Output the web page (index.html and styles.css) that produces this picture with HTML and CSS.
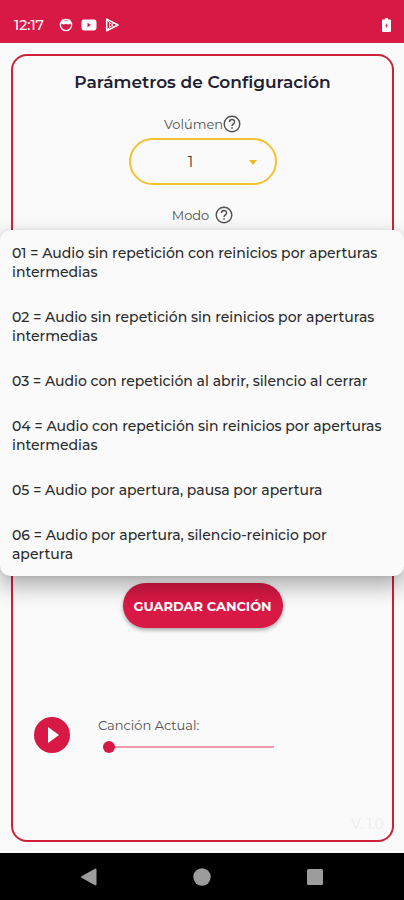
FILE: index.html
```html
<!DOCTYPE html>
<html lang="es">
<head>
<meta charset="utf-8">
<meta name="viewport" content="width=device-width, initial-scale=1">
<title>Parámetros de Configuración</title>
<link rel="stylesheet" href="styles.css">
</head>
<body>
<header class="status">
  <time class="clock">12:17</time>
  <svg class="icon" width="14" height="14" viewBox="0 0 14 14"><circle cx="7" cy="7" r="5.6" fill="none" stroke="#fff" stroke-width="1.4"/><path d="M2 3.6 3.2 1.3 5 2.4H9L10.8 1.3 12 3.6V5.4L9.4 6.6 7 6 4.6 6.6 2 5.4Z" fill="#fff"/></svg>
  <svg class="icon" width="16" height="14" viewBox="0 0 16 14"><rect x=".5" y="1.5" width="15" height="11" rx="2.4" fill="#fff"/><path d="M6.5 4.8V9.2L10 7Z" fill="#d81845"/></svg>
  <svg class="icon play-store" width="15" height="14" viewBox="0 0 15 14"><path d="M1.7 1.2V12.8L13 7Z" fill="none" stroke="#fff" stroke-width="1.5" stroke-linejoin="round"/><path d="M2 2 9.6 9M2 12 9.6 5M4.6 4.4V9.6" fill="none" stroke="#fff" stroke-width="1"/><circle cx="9" cy="7" r="1.8" fill="#d81845" stroke="#fff"/></svg>
  <svg class="icon battery" width="9" height="14" viewBox="0 0 9 14"><path d="M3 0H6V1.4H8Q9 1.4 9 2.4V13Q9 14 8 14H1Q0 14 0 13V2.4Q0 1.4 1 1.4H3Z" fill="#fff"/><path d="M4.8 5 3.2 8H4.2V10.4L5.9 7.2H4.8Z" fill="#d81845"/></svg>
</header>

<main class="card">
  <h1 class="title">Parámetros de Configuración</h1>

  <div class="field">
    <div class="field-head">
      <label for="volumen">Volúmen</label>
      <button class="help" type="button" aria-label="Ayuda de volumen"><svg width="18" height="18" viewBox="0 0 18 18" fill="none" stroke="#505050"><circle cx="9" cy="9" r="7.8" stroke-width="1.4"/><path d="M6.5 7.1C6.5 3.7 11.6 3.8 11.6 6.9 11.6 8.8 9 9 9 11.1" stroke-width="1.4"/><path d="M9 12.3V13.8" stroke-width="1.5"/></svg></button>
    </div>
    <div class="select-wrap">
      <select id="volumen" class="select"><option>1</option><option>2</option><option>3</option></select>
    </div>
  </div>

  <div class="field mode">
    <div class="field-head spaced">
      <span id="modo-label">Modo</span>
      <button class="help" type="button" aria-label="Ayuda de modo"><svg width="18" height="18" viewBox="0 0 18 18" fill="none" stroke="#505050"><circle cx="9" cy="9" r="7.8" stroke-width="1.4"/><path d="M6.5 7.1C6.5 3.7 11.6 3.8 11.6 6.9 11.6 8.8 9 9 9 11.1" stroke-width="1.4"/><path d="M9 12.3V13.8" stroke-width="1.5"/></svg></button>
    </div>
    <div class="menu" role="listbox" aria-labelledby="modo-label">
      <button type="button" role="option">01 = Audio sin repetición con reinicios por aperturas intermedias</button>
      <button type="button" role="option">02 = Audio sin repetición sin reinicios por aperturas intermedias</button>
      <button type="button" role="option">03 = Audio con repetición al abrir, silencio al cerrar</button>
      <button type="button" role="option">04 = Audio con repetición sin reinicios por aperturas intermedias</button>
      <button type="button" role="option">05 = Audio por apertura, pausa por apertura</button>
      <button type="button" role="option">06 = Audio por apertura, silencio-reinicio por apertura</button>
    </div>
  </div>

  <button class="save" type="button">GUARDAR CANCIÓN</button>

  <section class="player">
    <button class="play" type="button" aria-label="Reproducir"><svg width="36" height="36" viewBox="0 0 36 36"><circle cx="18" cy="18" r="18" fill="#d81845"/><path d="M14 10V26L25 18Z" fill="#fff"/></svg></button>
    <div class="track">
      <label for="posicion">Canción Actual:</label>
      <input id="posicion" class="slider" type="range" min="0" max="100" value="0">
    </div>
  </section>

  <footer class="version">V. 1.0</footer>
</main>

<nav class="navbar">
  <button type="button" aria-label="Atrás"><svg width="18" height="18" viewBox="0 0 18 18"><path d="M15.5 1.5V16.5L2 9Z" fill="#9c9c9c" stroke="#9c9c9c" stroke-width="2" stroke-linejoin="round"/></svg></button>
  <button type="button" aria-label="Inicio"><svg width="18" height="18" viewBox="0 0 18 18"><circle cx="9" cy="9" r="8.7" fill="#9c9c9c"/></svg></button>
  <button type="button" aria-label="Recientes"><svg width="18" height="18" viewBox="0 0 18 18"><rect x="1" y="1" width="16" height="16" rx="1.5" fill="#9c9c9c"/></svg></button>
</nav>
</body>
</html>
```
FILE: styles.css
```css
* { box-sizing: border-box; }

body {
  margin: 0;
  min-height: 100vh;
  display: flex;
  flex-direction: column;
  background: #fafafa;
  color: #2a2a2a;
  font: 14px/18px Montserrat, Inter, sans-serif;
}

button, select, input { font: inherit; color: inherit; margin: 0; }
button { border: 0; padding: 0; background: none; }
svg { display: block; }

.status {
  display: flex;
  align-items: center;
  gap: 8px;
  height: 43px;
  padding: 7px 13px 0 14px;
  background: #d81845;
  color: #fff;
}
.clock { margin-right: 7px; font-weight: 500; }
.battery { margin-left: auto; }

.card {
  flex: 1;
  display: flex;
  flex-direction: column;
  align-items: center;
  margin: 11px 10px 11px 11px;
  border: 2px solid #d02035;
  border-radius: 16px;
}

.title {
  margin: 15px 0 22px;
  font-size: 17px;
  line-height: 22px;
  font-weight: 600;
  color: #202030;
}

.field {
  width: 100%;
  display: flex;
  flex-direction: column;
  align-items: center;
  gap: 5px;
}
.field-head {
  display: flex;
  align-items: center;
  font-size: 13px;
  color: #505050;
}
.field-head.spaced { gap: 6px; }

.select-wrap {
  position: relative;
  width: 148px;
}
.select-wrap::after {
  content: "";
  position: absolute;
  right: 20px;
  top: 22px;
  border: 4px solid transparent;
  border-top: 5px solid #f4b91e;
  border-bottom: 0;
  pointer-events: none;
}
.select {
  appearance: none;
  display: block;
  width: 100%;
  height: 47px;
  padding: 0 24px 0 0;
  border: 2px solid #f4c130;
  border-radius: 24px;
  background: #fafafa;
  text-align: center;
  text-align-last: center;
}

.mode { position: relative; margin-top: 21px; }

.menu {
  position: absolute;
  top: 24px;
  left: -13px;
  right: -12px;
  z-index: 1;
  display: flex;
  flex-direction: column;
  border-radius: 10px;
  background: #fafafa;
  box-shadow: 0 10px 22px rgba(0, 0, 0, .32), 0 0 4px rgba(0, 0, 0, .1);
}
.menu button {
  padding: 14px 16px 12px 12px;
  font-weight: 500;
  line-height: 19px;
  text-align: left;
}

.save {
  width: 160px;
  height: 45px;
  margin-top: 359px;
  border-radius: 23px;
  background: #d81845;
  box-shadow: 0 2px 4px rgba(0, 0, 0, .35);
  color: #fff;
  font-size: 13px;
  font-weight: 700;
}

.player {
  align-self: stretch;
  display: flex;
  align-items: center;
  gap: 28px;
  margin: 88px 20px 0 21px;
}
.track {
  width: 176px;
  display: flex;
  flex-direction: column;
  gap: 7px;
  font-size: 13px;
  color: #505050;
}
.slider {
  appearance: none;
  width: 100%;
  height: 12px;
  padding-left: 5px;
  background: transparent;
}
.slider::-webkit-slider-runnable-track {
  height: 12px;
  background: linear-gradient(#ee9bb0, #ee9bb0) center / 100% 2px no-repeat;
}
.slider::-webkit-slider-thumb {
  appearance: none;
  width: 12px;
  height: 12px;
  border-radius: 50%;
  background: #d81845;
}

.version {
  margin: auto 8px 7px auto;
  color: #ededed;
}

.navbar {
  display: flex;
  align-items: center;
  justify-content: center;
  gap: 95px;
  height: 47px;
  background: #000;
}
```
